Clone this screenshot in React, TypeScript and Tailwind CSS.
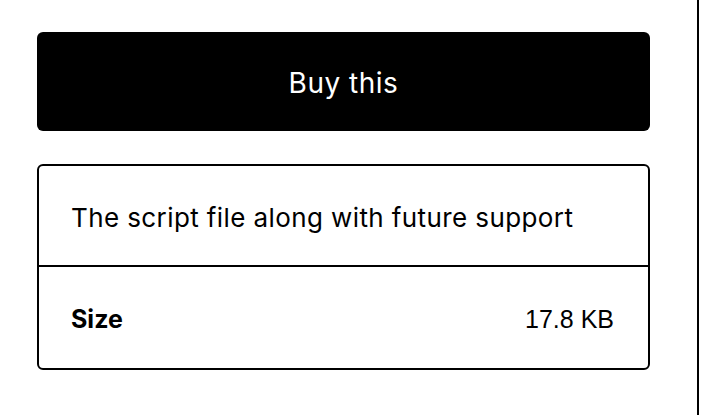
export default function App() {
  return (
    <div className="w-[699px] h-[415px] bg-white border-r-2 border-black font-['Inter',sans-serif] text-black">
      <div className="pl-[37px] pr-[47px] pt-8 flex flex-col gap-[33px]">
        <button className="h-[99px] w-full rounded-md bg-black text-white text-[28px] tracking-[0.5px] pt-[3px] flex items-center justify-center">
          Buy this
        </button>
        <div className="border-2 border-black rounded-md flex flex-col">
          <div className="h-[101px] px-8 pt-1 flex items-center text-[26px] tracking-[0.4px] border-b-2 border-black">
            The script file along with future support
          </div>
          <div className="h-[101px] pl-8 pr-[34px] pt-1 flex items-center justify-between">
            <span className="font-bold text-[25px]">Size</span>
            <span className="font-['Liberation_Sans',sans-serif] text-[25px]">17.8 KB</span>
          </div>
        </div>
      </div>
    </div>
  );
}
